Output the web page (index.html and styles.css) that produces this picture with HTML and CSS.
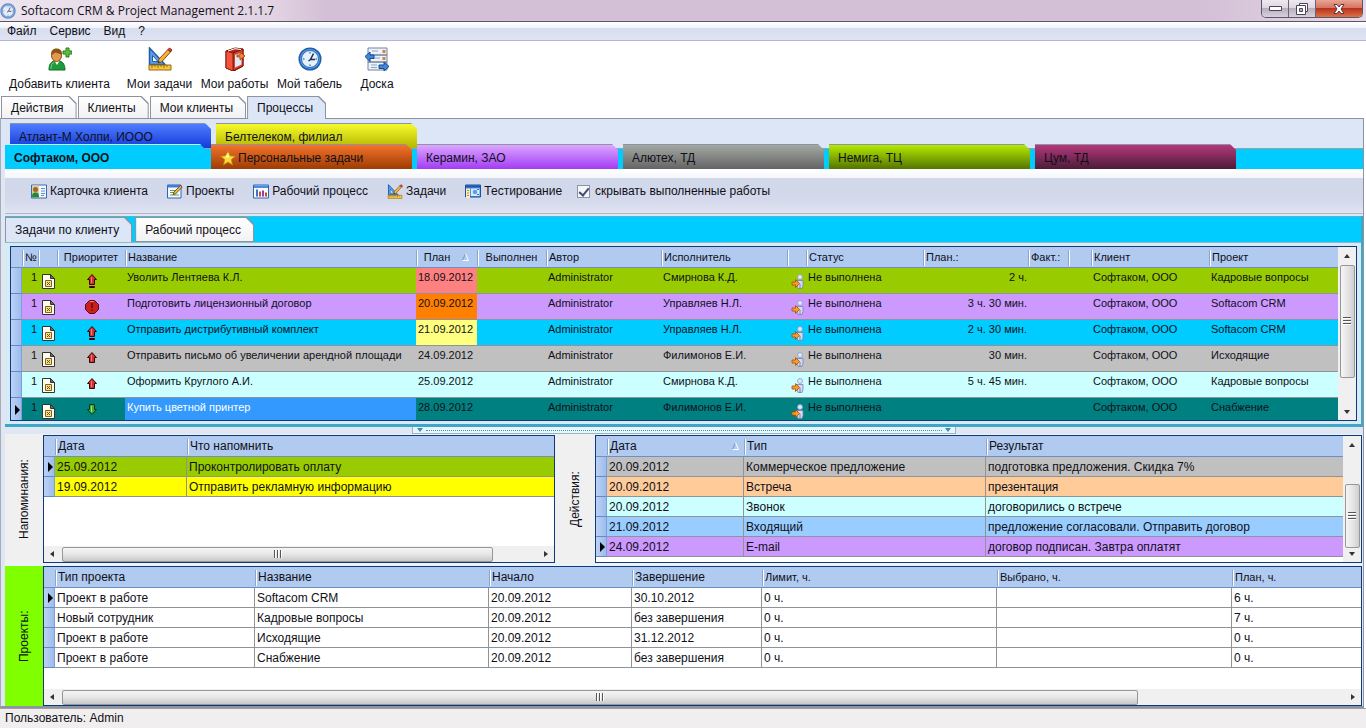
FILE: index.html
```html
<!DOCTYPE html>
<html lang="ru">

<head>
    <meta charset="UTF-8">
    <meta name="viewport" content="width=device-width, initial-scale=1.0">
    <title>Softacom CRM &amp; Project Management 2.1.1.7</title>
    <link rel="stylesheet" href="styles.css">
</head>

<body>
    <!-- Иконки -->
    <svg class="sprite" aria-hidden="true">
        <symbol id="i-clock" viewBox="0 0 24 24">
            <circle cx="12" cy="12" r="11.5" fill="#1f5fae" />
            <circle cx="12" cy="12" r="10" fill="#5b9fe6" />
            <circle cx="12" cy="12" r="8.5" fill="#e4f1fd" stroke="#2a68b4" stroke-width="1" />
            <path d="M12 5v1.500M12 17.500V19M5 12h1.500M17.500 12H19" stroke="#4a7fc0" stroke-width="1.500" />
            <path d="M15.500 6.500L12.500 12.500H17M12.500 12.500l-2 1.500" fill="none" stroke="#17304f" stroke-width="1.500" />
        </symbol>
        <symbol id="i-user-add" viewBox="0 0 24 24">
            <path d="M1 23c0-6 2-8 5-9h6c3 1 5 4 5 9z" fill="#1f9a3c" stroke="#0f6e28" />
            <path d="M6.500 14l2.500 4 2.500-4z" fill="#fff" />
            <path d="M3 22c0-4 1-6 3-6.500" fill="none" stroke="#6fd67e" />
            <ellipse cx="8.500" cy="8.500" rx="5" ry="6" fill="#e39a4d" stroke="#8a4b12" />
            <path d="M3.300 8.500C2.500 3 6 1.500 8.500 1.500S15 3 13.700 8.500C12 6 9 6.500 7.500 5.500 6 7 4.500 6.500 3.300 8.500z" fill="#8a5417" />
            <path d="M18 1h3v3h3v3h-3v3h-3V7h-3V4h3z" fill="#5cc043" stroke="#2b7d1e" />
        </symbol>
        <symbol id="i-tasks" viewBox="0 0 24 24">
            <path d="M1.500 1L17 17.500H1.500z" fill="#5f9fe8" stroke="#1d5cab" stroke-width="1.500" />
            <path d="M4.500 8.500L10 14.500H4.500z" fill="#fff" stroke="#1d5cab" />
            <path d="M1 18h22v5H1z" fill="#f5c83a" stroke="#9a6a12" />
            <path d="M4 18v3M7 18v2M10 18v3M13 18v2M16 18v3M19 18v2" stroke="#9a6a12" />
            <path d="M10 16l1-4L20 2.500l2.500 2.500L13.500 15z" fill="#f4b23c" stroke="#8c4a12" />
            <path d="M20 2.500L21.500 1 24 3l-1.500 2z" fill="#d8432a" stroke="#8a1f12" />
            <path d="M10 16l.500-2 1.500 1z" fill="#222" />
        </symbol>
        <symbol id="i-works" viewBox="0 0 24 24">
            <path d="M3 4L12 1l8 1v17l-9 5-8-3z" fill="#b3261a" stroke="#7d120b" />
            <path d="M10 6l10-4v17l-10 5z" fill="#d9412c" stroke="#7d120b" />
            <path d="M12 8l6.500-2.500v12L12 20.500z" fill="#dfeaf6" />
            <path d="M3 4l7 2v18l-7-3z" fill="#f0563d" stroke="#8d170d" />
            <path d="M5 4l7-2.300 6 .800" fill="none" stroke="#fff" />
            <path d="M14 8h3V5l5 4-5 4v-3h-3z" fill="#f3892b" stroke="#9b3a0b" stroke-width=".800" />
        </symbol>
        <symbol id="i-board" viewBox="0 0 24 24">
            <path d="M3 1h19v7H3zM3 8h19v7H3zM3 15h19v8H3z" fill="#eef3fa" stroke="#6f83a3" />
            <path d="M7 4h6M9 11h6M6 18h6M6 20.500h6" stroke="#8fa3c4" />
            <path d="M17.500 3h3v3h-3zM17.500 10h3v3h-3z" fill="#d9823a" />
            <path d="M0 9.500L5 5v3h4v3.500H5v3z" fill="#3f87dc" stroke="#17498c" />
            <path d="M24 19.500L19 15v3h-5v3.500h5v2.500z" fill="#3f87dc" stroke="#17498c" />
        </symbol>
        <symbol id="i-card" viewBox="0 0 16 14">
            <path d="M.500.500h15v13H.500z" fill="#f5f9ff" stroke="#3a6ab0" />
            <path d="M1 1h7v12H1z" fill="#d8d0a0" />
            <path d="M1 13c0-4 1-5 3.500-5S8 9 8 13z" fill="#208a3a" />
            <circle cx="4.500" cy="5" r="2.500" fill="#a8622a" />
            <path d="M10 4h4M10 6.500h4M10 9h4M10 11h3" stroke="#5b8ed0" />
        </symbol>
        <symbol id="i-project" viewBox="0 0 16 14">
            <path d="M.500.500h13.500v13H.500z" fill="#f6faff" stroke="#2d65b5" />
            <path d="M.500.500h13.500v2.500H.500z" fill="#3f7fd3" />
            <path d="M3 6h6M3 8h5M3 10.500h9" stroke="#5aa35c" />
            <path d="M6 10l1-2.500L13.500 1l1.700 1.500L8.500 9.500z" fill="#f2b63c" stroke="#553a16" stroke-width=".800" />
        </symbol>
        <symbol id="i-process" viewBox="0 0 16 14">
            <path d="M.500.500h15v13H.500z" fill="#f6faff" stroke="#2d65b5" />
            <path d="M1 1h14v2.500H1z" fill="#4b8ce0" />
            <path d="M3 5v7h2V5z" fill="#3b72c4" />
            <path d="M6 7v5h2V7z" fill="#d8452b" />
            <path d="M9 6v6h2V6z" fill="#8f3fa8" />
            <path d="M12 8v4h2V8z" fill="#d8452b" />
        </symbol>
        <symbol id="i-testing" viewBox="0 0 16 14">
            <path d="M.500.500h15v12H.500z" fill="#4f94e6" stroke="#1d4f9c" />
            <path d="M1 1h14v2H1z" fill="#1d56ae" />
            <path d="M6 4h8.500v7.500H6z" fill="#d9ecff" />
            <circle cx="10" cy="7.500" r="2.300" fill="#5aa1ea" />
            <path d="M12 5h2M12 10h2" stroke="#2f6fc4" />
            <path d="M1 4h4v9.500H1z" fill="#f4eccb" />
            <path d="M2 6h2M2 8.500h2M2 11h2" stroke="#c08b1c" />
        </symbol>
        <symbol id="i-star" viewBox="0 0 16 16">
            <path d="M8 .800l2 5 5.400.400-4.100 3.500 1.300 5.300L8 12.100 3.400 15l1.300-5.300L.600 6.200 6 5.800z" fill="#ffd83a" stroke="#b8860b" stroke-width=".800" />
            <path d="M8 2.500L9.200 6.500 8 8 5 7z" fill="#fff6ac" />
        </symbol>
        <symbol id="i-doc" viewBox="0 0 13 15">
            <path d="M.500.500h8l4 4v10H.500z" fill="#fffdf0" stroke="#33332c" />
            <path d="M8.500.500v4h4z" fill="#6a6a60" stroke="#33332c" />
            <path d="M3.500 6.500h6v6h-6z" fill="#ffe08a" stroke="#7d6420" />
            <path d="M5 8l3 3M8 8l-3 3" stroke="#6b531a" />
        </symbol>
        <symbol id="i-up" viewBox="0 0 10 11">
            <path d="M5 .500L9.500 5.500H7.500v5h-5v-5H.500z" fill="#c33" stroke="#400" />
            <path d="M4.500 3v6" stroke="#f08080" />
        </symbol>
        <symbol id="i-up-max" viewBox="0 0 10 14">
            <path d="M5 .500L9.500 5.500H7.500v5h-5v-5H.500z" fill="#c33" stroke="#400" />
            <path d="M4.500 3v6" stroke="#f08080" />
            <path d="M2.500 12.500h5v1h-5z" fill="#b11" stroke="#400" />
        </symbol>
        <symbol id="i-down" viewBox="0 0 10 11">
            <path d="M5 10.500L.500 5.500h2v-5h5v5h2z" fill="#3fa838" stroke="#0a3a12" />
            <path d="M4.500 2v6" stroke="#9be88c" />
        </symbol>
        <symbol id="i-alert" viewBox="0 0 14 14">
            <path d="M4.500.500h5l4 4v5l-4 4h-5l-4-4v-5z" fill="#c91f1f" stroke="#5c0808" />
            <path d="M6.300 3h1.400v5H6.300zM6.300 9.500h1.400V11H6.300z" fill="#5c0808" />
            <path d="M4.800 1.500h4" stroke="#f08080" />
        </symbol>
        <symbol id="i-person" viewBox="0 0 12 15">
            <circle cx="8.500" cy="3" r="2.500" fill="#dfe6fa" stroke="#8c99c8" stroke-width=".800" />
            <path d="M5.500 6.500h6v5l-1 3h-4l-1-3z" fill="#d4dbef" stroke="#7380ad" stroke-width=".800" />
            <path d="M8.500 10v4" stroke="#7380ad" />
            <path d="M.500 8H4V5.500L8 9.500l-4 4V11H.500z" fill="#ff9a2a" stroke="#a44e07" stroke-width=".800" />
        </symbol>
        <symbol id="i-sort" viewBox="0 0 7 8">
            <path d="M.500 7.500L3.500.500" stroke="#7d93c0" />
            <path d="M3.500.500l3 7h-6" fill="none" stroke="#fff" />
        </symbol>
    </svg>

    <header class="titlebar">
        <svg class="app-icon"><use href="#i-clock" /></svg>
        <h1>Softacom CRM &amp; Project Management 2.1.1.7</h1>
        <div class="window-buttons">
            <button class="win-btn" aria-label="Свернуть">
                <svg width="13" height="6" viewBox="0 0 13 6"><path d="M.500.500h12v4H.500z" fill="#fff" stroke="#4a4654" /></svg>
            </button>
            <button class="win-btn" aria-label="Развернуть">
                <svg width="12" height="12" viewBox="0 0 12 12">
                    <path d="M3.500.500h8v8h-8z" fill="#fff" stroke="#4a4654" />
                    <path d="M.500 2.500h9v9h-9z" fill="#fff" stroke="#4a4654" />
                    <path d="M3.500 5.500h3v3h-3z" fill="#bbb6c4" stroke="#4a4654" />
                </svg>
            </button>
            <button class="win-btn close" aria-label="Закрыть">
                <svg width="12" height="10" viewBox="0 0 12 10"><path d="M1 .500h3l2 2.500 2-2.500h3L8 5l3 4.500H8L6 7 4 9.500H1L4 5z" fill="#fff" stroke="#5a3438" /></svg>
            </button>
        </div>
    </header>

    <nav class="menubar">
        <button>Файл</button>
        <button>Сервис</button>
        <button>Вид</button>
        <button>?</button>
    </nav>

    <div class="toolbar">
        <button class="tool first"><svg><use href="#i-user-add" /></svg>Добавить клиента</button>
        <button class="tool"><svg><use href="#i-tasks" /></svg>Мои задачи</button>
        <button class="tool"><svg><use href="#i-works" /></svg>Мои работы</button>
        <button class="tool"><svg><use href="#i-clock" /></svg>Мой табель</button>
        <button class="tool last"><svg><use href="#i-board" /></svg>Доска</button>
    </div>

    <div class="tabs main-tabs" role="tablist">
        <button class="tab" role="tab">Действия</button>
        <button class="tab" role="tab">Клиенты</button>
        <button class="tab" role="tab">Мои клиенты</button>
        <button class="tab active" role="tab" aria-selected="true">Процессы</button>
    </div>

    <main class="page">
        <div class="client-tabs back" role="tablist">
            <button class="client-tab blue" role="tab">Атлант-М Холпи, ИООО</button>
            <button class="client-tab yellow" role="tab">Белтелеком, филиал</button>
        </div>
        <div class="client-tabs front" role="tablist">
            <button class="client-tab cyan" role="tab" aria-selected="true">Софтаком, ООО</button>
            <button class="client-tab orange" role="tab"><svg><use href="#i-star" /></svg>Персональные задачи</button>
            <button class="client-tab violet" role="tab">Керамин, ЗАО</button>
            <button class="client-tab gray" role="tab">Алютех, ТД</button>
            <button class="client-tab green" role="tab">Немига, ТЦ</button>
            <button class="client-tab plum" role="tab">Цум, ТД</button>
        </div>

        <div class="client-toolbar">
            <button><svg><use href="#i-card" /></svg>Карточка клиента</button>
            <button><svg><use href="#i-project" /></svg>Проекты</button>
            <button><svg><use href="#i-process" /></svg>Рабочий процесс</button>
            <button><svg><use href="#i-tasks" /></svg>Задачи</button>
            <button><svg><use href="#i-testing" /></svg>Тестирование</button>
            <label><input type="checkbox" checked>скрывать выполненные работы</label>
        </div>

        <section class="tasks">
            <div class="tabs sub-tabs" role="tablist">
                <button class="tab active" role="tab" aria-selected="true">Задачи по клиенту</button>
                <button class="tab" role="tab">Рабочий процесс</button>
            </div>
            <div class="tasks-body">
                <div class="grid tasks-grid">
                    <div class="grid-view">
                        <table>
                            <colgroup>
                                <col class="w11"><col class="w16"><col class="w19"><col class="w68"><col class="w291"><col class="w61">
                                <col class="w69"><col class="w115"><col class="w126"><col class="w19"><col class="w117"><col class="w105">
                                <col class="w40"><col class="w23"><col class="w118"><col>
                            </colgroup>
                            <thead>
                                <tr>
                                    <th></th><th>№</th><th></th><th class="center">Приоритет</th><th>Название</th>
                                    <th class="center">План<svg class="sort"><use href="#i-sort" /></svg></th><th class="center">Выполнен</th>
                                    <th>Автор</th><th>Исполнитель</th><th></th><th>Статус</th><th>План.:</th><th>Факт.:</th><th></th>
                                    <th>Клиент</th><th>Проект</th>
                                </tr>
                            </thead>
                            <tbody>
                                <tr class="row-olive">
                                    <td></td><td class="num">1</td><td><svg class="doc"><use href="#i-doc" /></svg></td>
                                    <td><svg class="prio"><use href="#i-up-max" /></svg></td><td>Уволить Лентяева К.Л.</td>
                                    <td class="overdue">18.09.2012</td><td></td><td>Administrator</td><td>Смирнова К.Д.</td>
                                    <td><svg class="person"><use href="#i-person" /></svg></td><td>Не выполнена</td><td class="num">2 ч.</td>
                                    <td></td><td></td><td>Софтаком, ООО</td><td>Кадровые вопросы</td>
                                </tr>
                                <tr class="row-violet">
                                    <td></td><td class="num">1</td><td><svg class="doc"><use href="#i-doc" /></svg></td>
                                    <td><svg class="prio"><use href="#i-alert" /></svg></td><td>Подготовить лицензионный договор</td>
                                    <td class="today">20.09.2012</td><td></td><td>Administrator</td><td>Управляев Н.Л.</td>
                                    <td><svg class="person"><use href="#i-person" /></svg></td><td>Не выполнена</td><td class="num">3 ч. 30 мин.</td>
                                    <td></td><td></td><td>Софтаком, ООО</td><td>Softacom CRM</td>
                                </tr>
                                <tr class="row-cyan">
                                    <td></td><td class="num">1</td><td><svg class="doc"><use href="#i-doc" /></svg></td>
                                    <td><svg class="prio"><use href="#i-up-max" /></svg></td><td>Отправить дистрибутивный комплект</td>
                                    <td class="soon">21.09.2012</td><td></td><td>Administrator</td><td>Управляев Н.Л.</td>
                                    <td><svg class="person"><use href="#i-person" /></svg></td><td>Не выполнена</td><td class="num">2 ч. 30 мин.</td>
                                    <td></td><td></td><td>Софтаком, ООО</td><td>Softacom CRM</td>
                                </tr>
                                <tr class="row-gray">
                                    <td></td><td class="num">1</td><td><svg class="doc"><use href="#i-doc" /></svg></td>
                                    <td><svg class="prio small"><use href="#i-up" /></svg></td><td>Отправить письмо об увеличении арендной площади</td>
                                    <td>24.09.2012</td><td></td><td>Administrator</td><td>Филимонов Е.И.</td>
                                    <td><svg class="person"><use href="#i-person" /></svg></td><td>Не выполнена</td><td class="num">30 мин.</td>
                                    <td></td><td></td><td>Софтаком, ООО</td><td>Исходящие</td>
                                </tr>
                                <tr class="row-ice">
                                    <td></td><td class="num">1</td><td><svg class="doc"><use href="#i-doc" /></svg></td>
                                    <td><svg class="prio small"><use href="#i-up" /></svg></td><td>Оформить Круглого А.И.</td>
                                    <td>25.09.2012</td><td></td><td>Administrator</td><td>Смирнова К.Д.</td>
                                    <td><svg class="person"><use href="#i-person" /></svg></td><td>Не выполнена</td><td class="num">5 ч. 45 мин.</td>
                                    <td></td><td></td><td>Софтаком, ООО</td><td>Кадровые вопросы</td>
                                </tr>
                                <tr class="row-teal current">
                                    <td></td><td class="num">1</td><td><svg class="doc"><use href="#i-doc" /></svg></td>
                                    <td><svg class="prio small"><use href="#i-down" /></svg></td><td class="selected">Купить цветной принтер</td>
                                    <td>28.09.2012</td><td></td><td>Administrator</td><td>Филимонов Е.И.</td>
                                    <td><svg class="person"><use href="#i-person" /></svg></td><td>Не выполнена</td><td></td>
                                    <td></td><td></td><td>Софтаком, ООО</td><td>Снабжение</td>
                                </tr>
                            </tbody>
                        </table>
                    </div>
                    <div class="scroll-v"><i class="arrow up"></i><div class="track"><div class="thumb"></div></div><i class="arrow down"></i></div>
                </div>
            </div>
        </section>

        <div class="splitter"><i class="arrow blue-down"></i><span></span><i class="arrow blue-down"></i></div>

        <div class="middle">
            <section class="pane reminders">
                <h2 class="side-label">Напоминания:</h2>
                <div class="grid column">
                    <div class="grid-view">
                        <table class="lined">
                            <colgroup><col class="w11"><col class="w132"><col></colgroup>
                            <thead>
                                <tr><th></th><th>Дата</th><th>Что напомнить</th></tr>
                            </thead>
                            <tbody>
                                <tr class="row-olive current"><td></td><td>25.09.2012</td><td>Проконтролировать оплату</td></tr>
                                <tr class="row-yellow"><td></td><td>19.09.2012</td><td>Отправить рекламную информацию</td></tr>
                            </tbody>
                        </table>
                    </div>
                    <div class="scroll-h"><i class="arrow left"></i><div class="track"><div class="thumb"></div></div><i class="arrow right"></i></div>
                </div>
            </section>

            <section class="pane actions">
                <h2 class="side-label">Действия:</h2>
                <div class="grid">
                    <div class="grid-view">
                        <table class="lined">
                            <colgroup><col class="w11"><col class="w137"><col class="w242"><col></colgroup>
                            <thead>
                                <tr><th></th><th>Дата<svg class="sort right"><use href="#i-sort" /></svg></th><th>Тип</th><th>Результат</th></tr>
                            </thead>
                            <tbody>
                                <tr class="row-gray"><td></td><td>20.09.2012</td><td>Коммерческое предложение</td><td>подготовка предложения. Скидка 7%</td></tr>
                                <tr class="row-peach"><td></td><td>20.09.2012</td><td>Встреча</td><td>презентация</td></tr>
                                <tr class="row-ice"><td></td><td>20.09.2012</td><td>Звонок</td><td>договорились о встрече</td></tr>
                                <tr class="row-sky"><td></td><td>21.09.2012</td><td>Входящий</td><td>предложение согласовали. Отправить договор</td></tr>
                                <tr class="row-violet current"><td></td><td>24.09.2012</td><td>E-mail</td><td>договор подписан. Завтра оплатят</td></tr>
                            </tbody>
                        </table>
                    </div>
                    <div class="scroll-v"><i class="arrow up"></i><div class="track"><div class="thumb"></div></div><i class="arrow down"></i></div>
                </div>
            </section>
        </div>

        <section class="pane projects">
            <h2 class="side-label">Проекты:</h2>
            <div class="grid column">
                <div class="grid-view">
                    <table class="lined">
                        <colgroup>
                            <col class="w11"><col class="w200"><col class="w234"><col class="w143"><col class="w130">
                            <col class="w235"><col class="w235"><col>
                        </colgroup>
                        <thead>
                            <tr>
                                <th></th><th>Тип проекта</th><th>Название</th><th>Начало</th><th>Завершение</th>
                                <th class="small">Лимит, ч.</th><th class="small">Выбрано, ч.</th><th class="small">План, ч.</th>
                            </tr>
                        </thead>
                        <tbody>
                            <tr class="current"><td></td><td>Проект в работе</td><td>Softacom CRM</td><td>20.09.2012</td><td>30.10.2012</td><td>0 ч.</td><td></td><td>6 ч.</td></tr>
                            <tr><td></td><td>Новый сотрудник</td><td>Кадровые вопросы</td><td>20.09.2012</td><td>без завершения</td><td>0 ч.</td><td></td><td>7 ч.</td></tr>
                            <tr><td></td><td>Проект в работе</td><td>Исходящие</td><td>20.09.2012</td><td>31.12.2012</td><td>0 ч.</td><td></td><td>0 ч.</td></tr>
                            <tr><td></td><td>Проект в работе</td><td>Снабжение</td><td>20.09.2012</td><td>без завершения</td><td>0 ч.</td><td></td><td>0 ч.</td></tr>
                        </tbody>
                    </table>
                </div>
                <div class="scroll-h"><i class="arrow left"></i><div class="track"><div class="thumb"></div></div><i class="arrow right"></i></div>
            </div>
        </section>
    </main>

    <footer class="statusbar">Пользователь: Admin</footer>
</body>

</html>
```

FILE: styles.css
```css
* {
    margin: 0;
    padding: 0;
    box-sizing: border-box;
}

body {
    min-height: 100vh;
    display: flex;
    flex-direction: column;
    background: #fff;
    color: #101018;
    font: 12px/16px "Liberation Sans", Arial, sans-serif;
}

button {
    border: none;
    background: none;
    color: inherit;
    font: inherit;
    white-space: nowrap;
}

.sprite {
    position: absolute;
    width: 0;
    height: 0;
}

/* Заголовок окна */
.titlebar {
    height: 22px;
    display: flex;
    align-items: center;
    background: linear-gradient(90deg, #ece4ee, #e2d3e2 20%, #d3bfd6 24%, #d3bfd6 88%, #e6dae8);
    border-bottom: 1px solid #5c5566;
}

.app-icon {
    width: 16px;
    height: 16px;
    opacity: 0.7;
}

.titlebar h1 {
    flex: 1;
    padding-left: 5px;
    font: 12px/16px "Open Sans", "Segoe UI", sans-serif;
}

.window-buttons {
    display: flex;
    align-self: flex-start;
    height: 18px;
    margin-right: 3px;
    border: 1px solid #5c5566;
    border-top: none;
    border-radius: 0 0 5px 5px;
    overflow: hidden;
}

.win-btn {
    width: 27px;
    display: flex;
    align-items: center;
    justify-content: center;
    background: linear-gradient(#eee8f0, #ddd4e0 50%, #b8afbe 50%, #d8d0dc);
    border-right: 1px solid #6b6474;
}

.win-btn.close {
    width: 46px;
    background: linear-gradient(#e8a595, #d4705c 50%, #b8331d 50%, #dc7248);
    border-right: none;
}

/* Меню */
.menubar {
    height: 19px;
    display: flex;
    gap: 13px;
    padding-left: 7px;
    background: linear-gradient(#fff, #eef1fa 35%, #d8deef 35%, #dfe3f3);
    border-bottom: 1px solid #b4b6cc;
}

.toolbar {
    display: flex;
    height: 55px;
    padding-top: 6px;
}

.tool {
    min-width: 75px;
    display: flex;
    flex-direction: column;
    align-items: center;
    gap: 5px;
}

.tool.first {
    min-width: 119px;
    margin-right: 3px;
}

.tool.last {
    min-width: 60px;
}

.tool svg {
    width: 24px;
    height: 24px;
}

/* Вкладки со срезанным углом */
.tabs {
    display: flex;
}

.tab {
    position: relative;
    z-index: 0;
    height: 23px;
    padding: 0 13px 0 10px;
    background: #8d93a0;
    clip-path: polygon(0 0, calc(100% - 7px) 0, 100% 7px, 100% 100%, 0 100%);
}

.tab::before {
    content: "";
    position: absolute;
    inset: 1px;
    z-index: -1;
    background: linear-gradient(#fff, #f2f2f4);
    clip-path: polygon(0 0, calc(100% - 7px) 0, 100% 7px, 100% 100%, 0 100%);
}

.tab.active::before {
    bottom: 0;
    background: #dce6f6;
}

.main-tabs {
    gap: 1px;
    padding-left: 1px;
    margin-bottom: -1px;
    z-index: 1;
}

.page {
    flex: 1;
    display: flex;
    flex-direction: column;
    margin-right: 2px;
    padding: 4px 0 0 4px;
    background: linear-gradient(#dce6f6, #dce6f6) 0 0 / 100% 50px no-repeat, #e0e7f2;
    border: 1px solid #8d93a0;
    border-bottom-width: 2px;
    border-left-color: #a4acbc;
}

/* Клиенты */
.client-tabs {
    display: flex;
    gap: 5px;
}

.client-tabs.back {
    padding-left: 5px;
}

.client-tabs.front {
    margin-top: -5px;
    z-index: 1;
    background: linear-gradient(transparent 4px, #9aa0a4 4px, #9aa0a4 5px, #00ccff 5px);
}

.client-tab {
    width: 201px;
    height: 26px;
    display: flex;
    align-items: center;
    gap: 2px;
    padding: 1px 9px 0;
    border-top: 1px solid #8d93a0;
    clip-path: polygon(0 0, calc(100% - 6px) 0, 100% 6px, 100% 100%, 0 100%);
}

.front .client-tab {
    height: 25px;
}

.client-tab svg {
    width: 16px;
    height: 16px;
}

.client-tab.blue {
    background: linear-gradient(#4f7dff, #1038d8);
}

.client-tab.yellow {
    background: linear-gradient(#f6fa2c, #b0b400);
}

.client-tab.cyan {
    background: #00ccff;
    border-top-color: #bfefff;
    font-weight: bold;
}

.client-tab.orange {
    background: linear-gradient(#f5732a, #9c3c04);
}

.client-tab.violet {
    background: linear-gradient(#dba6ff, #a23cf4);
}

.client-tab.gray {
    background: linear-gradient(#a4a8a4, #646464);
}

.client-tab.green {
    background: linear-gradient(#b4ea00, #547400);
}

.client-tab.plum {
    background: linear-gradient(#b4387c, #4c1c38);
}

.client-toolbar {
    display: flex;
    align-items: center;
    gap: 19px;
    height: 45px;
    padding: 0 24px 0 26px;
    background: linear-gradient(#fff, #f4f6fb 9px, #d0d8ea 9px, #d4d9eb 32px, #dfe5f3);
    border-bottom: 1px solid #b6b4c6;
}

.client-toolbar button,
.client-toolbar label {
    display: flex;
    align-items: center;
    gap: 3px;
}

.client-toolbar svg {
    width: 16px;
    height: 15px;
}

.client-toolbar label {
    gap: 5px;
    margin-left: -4px;
}

.client-toolbar input {
    appearance: none;
    width: 13px;
    height: 13px;
    border: 1px solid #8a94a6;
    background: #f4f6fa;
    display: grid;
    place-items: center;
}

.client-toolbar input:checked::before {
    content: "";
    width: 4px;
    height: 8px;
    border: solid #3f4d78;
    border-width: 0 2px 2px 0;
    transform: rotate(40deg);
}

/* Задачи */
.tasks {
    border: solid #3fa6c4;
    border-width: 0 2px 3px 0;
    background: #d6ebf8;
    margin-top: 2px;
}

.sub-tabs {
    gap: 3px;
    background: #00ccff;
    border-top: 1px solid #4fb8cc;
    border-bottom: 1px solid #8fb8c8;
}

.sub-tabs .tab {
    height: 25px;
}

.tasks-body {
    padding: 3px 4px 3px 5px;
}

/* Таблицы */
.grid {
    flex: 1;
    min-width: 0;
    display: flex;
    background: #fff;
    border: 1px solid #12387a;
}

.grid.column {
    flex-direction: column;
}

.grid-view {
    flex: 1;
    min-width: 0;
    overflow: hidden;
}

.tasks-grid {
    height: 175px;
    font-size: 11px;
}

table {
    width: 100%;
    table-layout: fixed;
    border-collapse: separate;
    border-spacing: 0;
}

th {
    height: 21px;
    padding-left: 3px;
    font-weight: normal;
    text-align: left;
    white-space: nowrap;
    overflow: hidden;
    background: #b0caf0;
    border-bottom: 1px solid #6f8fc4;
}

th + th {
    background:
        linear-gradient(#8aa4d0, #8aa4d0) 0 3px / 1px 16px no-repeat,
        linear-gradient(#fff, #fff) 1px 3px / 1px 16px no-repeat,
        #b0caf0;
}

th.center {
    padding-left: 0;
    text-align: center;
}

th.small {
    font-size: 11px;
}

.sort {
    width: 7px;
    height: 8px;
    margin-left: 12px;
}

.sort.right {
    float: right;
    margin: 4px 5px 0 0;
}

td {
    height: 20px;
    padding-left: 2px;
    line-height: 16px;
    white-space: nowrap;
    border-bottom: 1px solid #8f9498;
}

td:first-child {
    background: linear-gradient(90deg, #bcd2f6, #9dbcec);
    border-right: 1px solid #7f9fd6;
    border-bottom-color: #6488c8;
}

.lined td + td:not(:last-child) {
    border-right: 1px solid #8f9498;
}

.tasks-grid td {
    height: 26px;
    padding: 1px 1px 0 2px;
    vertical-align: top;
}

td.num {
    text-align: right;
}

/* Указатель текущей строки */
.current td:first-child {
    position: relative;
}

.current td:first-child::after {
    content: "";
    position: absolute;
    left: 4px;
    top: 5px;
    border: solid transparent;
    border-width: 5px 0 5px 5px;
    border-left-color: #000;
}

.tasks-grid .current td:first-child::after {
    top: 7px;
}

td svg {
    display: block;
    margin: 5px auto 0;
}

.doc {
    width: 13px;
    height: 15px;
}

.prio {
    width: 14px;
    height: 14px;
}

.prio.small {
    height: 11px;
}

.person {
    width: 13px;
    height: 15px;
}

.row-olive td + td {
    background: #99cc00;
}

.row-violet td + td {
    background: #cc99ff;
}

.row-cyan td + td {
    background: #00ccff;
}

.row-gray td + td {
    background: #c0c0c0;
}

.row-ice td + td {
    background: #ccffff;
}

.row-teal td + td {
    background: #008080;
}

.row-yellow td + td {
    background: #ffff00;
}

.row-peach td + td {
    background: #ffcc99;
}

.row-sky td + td {
    background: #99ccff;
}

tr td.overdue {
    background: #ff8080;
}

tr td.today {
    background: #ff8000;
}

tr td.soon {
    background: #ffff80;
}

tr td.selected {
    background: #3399ff;
    color: #fff;
}

.w11 { width: 11px; }
.w16 { width: 16px; }
.w19 { width: 19px; }
.w23 { width: 23px; }
.w40 { width: 40px; }
.w61 { width: 61px; }
.w68 { width: 68px; }
.w69 { width: 69px; }
.w105 { width: 105px; }
.w115 { width: 115px; }
.w117 { width: 117px; }
.w118 { width: 118px; }
.w126 { width: 126px; }
.w130 { width: 130px; }
.w132 { width: 132px; }
.w137 { width: 137px; }
.w143 { width: 143px; }
.w200 { width: 200px; }
.w234 { width: 234px; }
.w235 { width: 235px; }
.w242 { width: 242px; }
.w291 { width: 291px; }

/* Полосы прокрутки */
.scroll-v,
.scroll-h {
    display: flex;
    align-items: center;
    justify-content: space-between;
    background: #f0f0f0;
}

.scroll-v {
    flex-direction: column;
    width: 18px;
    padding: 7px 0 6px;
}

.scroll-h {
    height: 16px;
    padding: 0 6px;
}

.track {
    flex: 1;
    display: flex;
}

.scroll-v .track {
    flex-direction: column;
    margin: 7px 0 4px;
}

.scroll-h .track {
    margin: 0 8px;
}

.thumb {
    display: flex;
    align-items: center;
    justify-content: center;
    border: 1px solid #979797;
    border-radius: 2px;
}

.scroll-v .thumb {
    width: 15px;
    background: linear-gradient(90deg, #f5f5f5, #e6e6e6 50%, #cfcfd2);
}

.scroll-h .thumb {
    height: 15px;
    background: linear-gradient(#f5f5f5, #e6e6e6 50%, #c8c8ca);
}

.thumb::before {
    content: "";
    width: 8px;
    height: 8px;
    background: repeating-linear-gradient(90deg, #555 0 1px, #fff 1px 2px, transparent 2px 3px);
}

.scroll-v .thumb::before {
    background: repeating-linear-gradient(#555 0 1px, #fff 1px 2px, transparent 2px 3px);
}

.tasks-grid .thumb {
    height: 80%;
}

.actions .track {
    justify-content: flex-end;
}

.actions .thumb {
    height: 68%;
}

.reminders .thumb {
    width: 91%;
}

.projects .thumb {
    width: 84%;
}

.arrow {
    border: 3px solid transparent;
}

.arrow.up {
    border-width: 0 3px 4px;
    border-bottom-color: #333;
}

.arrow.down {
    border-width: 4px 3px 0;
    border-top-color: #333;
}

.arrow.left {
    border-width: 3px 4px 3px 0;
    border-right-color: #333;
}

.arrow.right {
    border-width: 3px 0 3px 4px;
    border-left-color: #333;
}

.arrow.blue-down {
    border-width: 4px 3px 0;
    border-top-color: #3c8cb8;
}

.splitter {
    display: flex;
    align-items: center;
    gap: 3px;
    align-self: center;
    width: 40%;
    height: 7px;
    padding: 0 4px;
    background: #e8f6fa;
    border: 1px solid #9cb4bc;
    border-top: none;
}

.splitter span {
    flex: 1;
    border-top: 1px dotted #4a90b8;
}

/* Нижние панели */
.middle {
    display: flex;
    background: #e8f4f8;
    margin-right: 1px;
    padding: 1px 0 3px;
}

.pane {
    display: flex;
}

.reminders {
    flex: 550 1 0;
}

.actions {
    flex: 807 1 0;
}

.side-label {
    width: 38px;
    display: flex;
    align-items: center;
    justify-content: center;
    background: #f0f0f0;
    font-weight: normal;
    font-size: 12px;
    line-height: 16px;
    writing-mode: vertical-rl;
    transform: rotate(180deg);
}

.actions .side-label {
    width: 40px;
}

.middle .grid {
    height: 128px;
}

.projects {
    flex: 1;
    margin-right: 1px;
}

.projects .side-label {
    background: #80ff00;
}

.statusbar {
    height: 20px;
    padding: 1px 5px;
    background: #f0eeee;
    border-top: 1px solid #a0a0a0;
}
```
